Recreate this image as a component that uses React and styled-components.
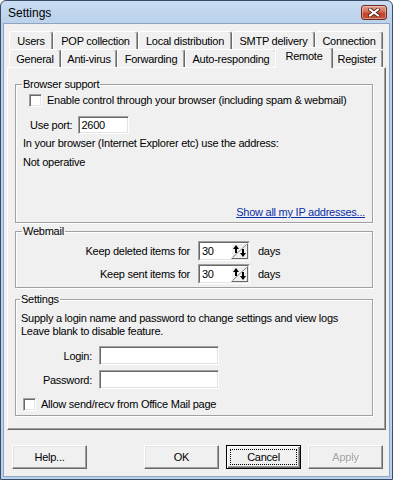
import React from "react";
import styled, { createGlobalStyle } from "styled-components";

const GlobalStyle = createGlobalStyle`
  html, body {
    margin: 0;
    padding: 0;
    background: #ffffff;
  }
  body {
    font-family: "Liberation Sans", Arial, sans-serif;
    font-size: 11px;
    letter-spacing: -0.25px;
    color: #000;
  }
  * {
    box-sizing: border-box;
  }
`;

const Window = styled.div`
  width: 393px;
  height: 480px;
  display: flex;
  flex-direction: column;
  background: linear-gradient(#c9dcf2 0px, #b9d1ea 24px, #b9d1ea 100%);
  border: 1px solid #3a4d66;
  border-radius: 6px 6px 0 0;
  padding: 0 3px 3px;
`;

const TitleBar = styled.div`
  height: 23px;
  display: flex;
  align-items: center;
  justify-content: space-between;
  padding: 0 2px 0 4px;
`;

const TitleText = styled.div`
  font-size: 12px;
  letter-spacing: 0;
  color: #000;
`;

const CloseButton = styled.div`
  width: 26px;
  height: 15px;
  border: 1px solid #6e2a20;
  border-radius: 3px;
  background: linear-gradient(#e2a08f 0%, #d56e57 45%, #c2432a 55%, #c4543a 100%);
  box-shadow: inset 0 0 0 1px rgba(255, 255, 255, 0.35);
  display: flex;
  align-items: center;
  justify-content: center;
`;

const Client = styled.div`
  flex: 1;
  background: #f0f0f0;
  box-shadow: 0 0 0 1px #8ea4c1;
  display: flex;
  flex-direction: column;
  padding-top: 7px;
`;

const TabStrip = styled.div`
  margin: 0 6px 0 5px;
  display: flex;
  flex-direction: column;
`;

const TabRow = styled.div`
  display: flex;
  height: 18px;
`;

const Tab = styled.div`
  width: ${(p) => p.$w}px;
  height: 18px;
  display: flex;
  align-items: center;
  justify-content: center;
  border: 1px solid;
  border-bottom: none;
  border-color: #ffffff #696969 transparent #ffffff;
  border-radius: 3px 3px 0 0;
  box-shadow: inset -1px 0 0 #a0a0a0;
  background: #f0f0f0;
  white-space: nowrap;
`;

const ActiveTab = styled(Tab)`
  width: ${(p) => p.$w + 4}px;
  height: 21px;
  margin: -2px -2px 0;
  align-items: flex-start;
  padding-top: 2px;
  position: relative;
  z-index: 1;
`;

const Panel = styled.div`
  margin: 0 3px;
  border: 1px solid;
  border-color: #ffffff #696969 #696969 #ffffff;
  box-shadow: inset -1px -1px 0 #a0a0a0;
  padding: 10px 12px 13px 7px;
  display: flex;
  flex-direction: column;
`;

const Group = styled.fieldset`
  margin: ${(p) => p.$mt || 0}px 0 0;
  padding: 0 7px ${(p) => p.$pb}px ${(p) => p.$pl || 7}px;
  border: 1px solid #a0a0a0;
  box-shadow: inset 1px 1px 0 #ffffff, 1px 1px 0 #ffffff;
  display: flex;
  flex-direction: column;
  min-width: 0;
`;

const Legend = styled.legend`
  margin-left: -1px;
  padding: 0 1px;
  line-height: 13px;
`;

const CheckRow = styled.div`
  display: flex;
  align-items: center;
  gap: 5px;
  height: 13px;
  line-height: 13px;
  margin: ${(p) => p.$mt}px 0 0 ${(p) => p.$ml}px;
`;

const Checkbox = styled.span`
  width: 13px;
  height: 13px;
  flex: none;
  background: #ffffff;
  border: 1px solid;
  border-color: #a0a0a0 #ffffff #ffffff #a0a0a0;
  box-shadow: inset 1px 1px 0 #696969, inset -1px -1px 0 #e3e3e3;
`;

const FieldRow = styled.div`
  display: flex;
  align-items: center;
  gap: ${(p) => p.$gap}px;
  margin: ${(p) => p.$mt}px 0 0 ${(p) => p.$ml || 0}px;
`;

const FieldLabel = styled.span`
  width: ${(p) => (p.$w ? `${p.$w}px` : "auto")};
  text-align: right;
  white-space: nowrap;
  flex: none;
`;

const TextBox = styled.input`
  width: ${(p) => p.$w}px;
  height: ${(p) => p.$h}px;
  padding: 0 2px;
  margin: 0;
  font: inherit;
  letter-spacing: inherit;
  color: #000;
  background: #ffffff;
  border: 1px solid;
  border-color: #a0a0a0 #ffffff #ffffff #a0a0a0;
  box-shadow: inset 1px 1px 0 #696969, inset -1px -1px 0 #e3e3e3;
  outline: none;
`;

const Line = styled.div`
  line-height: 13px;
  margin-top: ${(p) => p.$mt}px;
  white-space: nowrap;
`;

const LinkRow = styled.div`
  display: flex;
  justify-content: flex-end;
  line-height: 13px;
  margin-top: ${(p) => p.$mt}px;
`;

const Link = styled.a`
  color: #0b2fa8;
  text-decoration: underline;
  cursor: pointer;
`;

const SpinOuter = styled.div`
  width: 52px;
  height: 20px;
  border: 1px solid;
  border-color: #a0a0a0 #ffffff #ffffff #a0a0a0;
  flex: none;
`;

const SpinInner = styled.div`
  height: 100%;
  display: flex;
  background: #ffffff;
  border: 1px solid;
  border-color: #696969 #e3e3e3 #e3e3e3 #696969;
`;

const SpinValue = styled.span`
  flex: 1;
  padding-left: 2px;
  line-height: 16px;
`;

const SpinButton = styled.span`
  width: 17px;
  height: 16px;
  flex: none;
  background: #f0f0f0;
  border: 1px solid;
  border-color: #ffffff #696969 #696969 #ffffff;
  display: flex;
`;

const ButtonBar = styled.div`
  display: flex;
  gap: 7px;
  margin-top: 15px;
  padding: 0 6px 0 8px;
`;

const Spacer = styled.div`
  flex: 1;
`;

const Button = styled.button`
  width: 75px;
  height: 24px;
  margin: 0;
  font: inherit;
  letter-spacing: inherit;
  background: #f0f0f0;
  color: ${(p) => (p.disabled ? "#a0a0a0" : "#000")};
  text-shadow: ${(p) => (p.disabled ? "1px 1px 0 #ffffff" : "none")};
  border: 1px solid;
  border-color: ${(p) =>
    p.$default ? "#000 #000 #000 #000" : "#ffffff #696969 #696969 #ffffff"};
  box-shadow: ${(p) =>
    p.$default
      ? "inset 1px 1px 0 #ffffff, inset -1px -1px 0 #696969, inset -2px -2px 0 #a0a0a0"
      : "inset -1px -1px 0 #a0a0a0, inset 1px 1px 0 #e3e3e3"};
  display: flex;
  align-items: center;
  justify-content: center;
  padding: 3px;
`;

const FocusRect = styled.span`
  flex: 1;
  align-self: stretch;
  display: flex;
  align-items: center;
  justify-content: center;
  border: 1px dotted #000;
`;

const CloseGlyph = () => (
  <svg width="12" height="9" viewBox="0 0 12 9">
    <path d="M2 1.5 L10 7.5 M10 1.5 L2 7.5" stroke="#4a1a12" strokeWidth="3.6" strokeLinecap="square" />
    <path d="M2 1.5 L10 7.5 M10 1.5 L2 7.5" stroke="#ffffff" strokeWidth="2" strokeLinecap="square" />
  </svg>
);

const SpinGlyph = () => (
  <svg width="15" height="14" viewBox="0 0 15 14">
    <path d="M0.5 13.5 L14.5 0.5" stroke="#808080" strokeWidth="1" />
    <path d="M4 1 L1 5 L7 5 Z" fill="#000" />
    <rect x="3" y="5" width="2" height="4" fill="#000" />
    <rect x="10" y="5" width="2" height="4" fill="#000" />
    <path d="M8 9 L14 9 L11 13 Z" fill="#000" />
  </svg>
);

const SpinBox = ({ value }) => (
  <SpinOuter>
    <SpinInner>
      <SpinValue>{value}</SpinValue>
      <SpinButton>
        <SpinGlyph />
      </SpinButton>
    </SpinInner>
  </SpinOuter>
);

const topTabs = [
  ["Users", 44],
  ["POP collection", 85],
  ["Local distribution", 94],
  ["SMTP delivery", 83],
  ["Connection", 68],
];

const bottomTabs = [
  ["General", 52],
  ["Anti-virus", 56],
  ["Forwarding", 68],
  ["Auto-responding", 92],
  ["Remote", 54, true],
  ["Register", 52],
];

const App = () => {
  return (
    <>
      <GlobalStyle />
      <Window>
        <TitleBar>
          <TitleText>Settings</TitleText>
          <CloseButton>
            <CloseGlyph />
          </CloseButton>
        </TitleBar>
        <Client>
          <TabStrip>
            <TabRow>
              {topTabs.map(([label, w]) => (
                <Tab key={label} $w={w}>
                  {label}
                </Tab>
              ))}
            </TabRow>
            <TabRow>
              {bottomTabs.map(([label, w, active]) =>
                active ? (
                  <ActiveTab key={label} $w={w}>
                    {label}
                  </ActiveTab>
                ) : (
                  <Tab key={label} $w={w}>
                    {label}
                  </Tab>
                )
              )}
            </TabRow>
          </TabStrip>

          <Panel>
            <Group $pb={3}>
              <Legend>Browser support</Legend>
              <CheckRow $mt={3} $ml={6}>
                <Checkbox />
                <span>Enable control through your browser (including spam &amp; webmail)</span>
              </CheckRow>
              <FieldRow $mt={9} $ml={7} $gap={6}>
                <FieldLabel>Use port:</FieldLabel>
                <TextBox $w={51} $h={18} readOnly defaultValue="2600" />
              </FieldRow>
              <Line $mt={3}>In your browser (Internet Explorer etc) use the address:</Line>
              <Line $mt={6}>Not operative</Line>
              <LinkRow $mt={37}>
                <Link>Show all my IP addresses...</Link>
              </LinkRow>
            </Group>

            <Group $mt={2} $pb={3}>
              <Legend>Webmail</Legend>
              <FieldRow $mt={3} $gap={8}>
                <FieldLabel $w={167}>Keep deleted items for</FieldLabel>
                <SpinBox value="30" />
                <span>days</span>
              </FieldRow>
              <FieldRow $mt={3} $gap={8}>
                <FieldLabel $w={167}>Keep sent items for</FieldLabel>
                <SpinBox value="30" />
                <span>days</span>
              </FieldRow>
            </Group>

            <Group $mt={5} $pb={4} $pl={5}>
              <Legend>Settings</Legend>
              <Line $mt={6}>Supply a login name and password to change settings and view logs</Line>
              <Line $mt={0}>Leave blank to disable feature.</Line>
              <FieldRow $mt={8} $gap={7}>
                <FieldLabel $w={71}>Login:</FieldLabel>
                <TextBox $w={120} $h={19} readOnly defaultValue="" />
              </FieldRow>
              <FieldRow $mt={5} $gap={7}>
                <FieldLabel $w={71}>Password:</FieldLabel>
                <TextBox $w={120} $h={19} readOnly defaultValue="" />
              </FieldRow>
              <CheckRow $mt={9} $ml={2}>
                <Checkbox />
                <span>Allow send/recv from Office Mail page</span>
              </CheckRow>
            </Group>
          </Panel>

          <ButtonBar>
            <Button>Help...</Button>
            <Spacer />
            <Button>OK</Button>
            <Button $default>
              <FocusRect>Cancel</FocusRect>
            </Button>
            <Button disabled>Apply</Button>
          </ButtonBar>
        </Client>
      </Window>
    </>
  );
};

export default App;
